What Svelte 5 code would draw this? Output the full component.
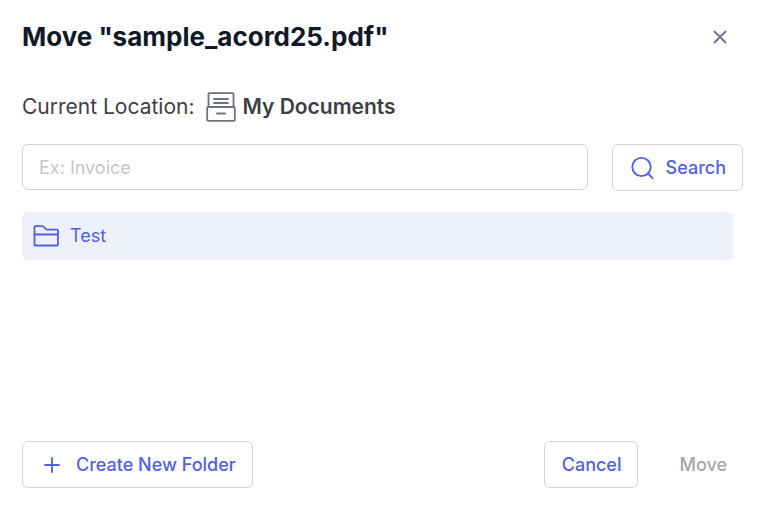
<script>
  const fileName = 'sample_acord25.pdf';
  const currentLocation = 'My Documents';
  const folders = ['Test'];

  let query = $state('');
  let creating = $state(false);
  let open = $state(true);
  let target = $state('');

  const visible = $derived(
    folders.filter((name) => name.toLowerCase().includes(query.trim().toLowerCase()))
  );

  function close() {
    open = false;
  }
</script>

{#if open}
  <div class="dialog" role="dialog" aria-labelledby="dialog-title">
    <header>
      <h1 id="dialog-title">Move "{fileName}"</h1>
      <button class="close" aria-label="Close" onclick={close}>
        <svg width="16" height="16" viewBox="0 0 16 16">
          <path d="M2.500 2.500l11 11M13.500 2.500L2.500 13.500" />
        </svg>
      </button>
    </header>

    <div class="location">
      <span>Current Location:</span>
      <svg width="30" height="30" viewBox="0 0 30 30">
        <path d="M2.500 15V2a.8.8 0 0 1 .8-.8h23.400a.8.8 0 0 1 .8.8V15" />
        <rect x="1.2" y="15" width="27.6" height="13.8" rx="1" />
        <path d="M8 7h14M8 11h14M11 21.5h8" />
      </svg>
      <strong>{currentLocation}</strong>
    </div>

    <form class="search" onsubmit={(e) => e.preventDefault()}>
      <input type="text" aria-label="Folder name" placeholder="Ex: Invoice" bind:value={query} />
      <button class="outlined with-icon" type="submit">
        <svg width="24" height="24" viewBox="0 0 24 24">
          <circle cx="11.5" cy="11" r="9.2" />
          <path d="M18 17.500l4.500 4.500" />
        </svg>
        Search
      </button>
    </form>

    <ul class="folders">
      {#each visible as name}
        <li>
          <button class="folder" onclick={() => (target = name)}>
            <svg width="26" height="22" viewBox="0 0 26 22">
              <path d="M1.500 19.700V2a.8.8 0 0 1 .8-.8h7a1.500 1.500 0 0 1 1 .4l3 2.700a1.500 1.500 0 0 0 1 .4h9.900a.8.8 0 0 1 .8.8v14.200a.8.8 0 0 1-.8.8H2.300a.8.8 0 0 1-.8-.8zM1.500 9.500h23.500" />
            </svg>
            {name}
          </button>
        </li>
      {/each}
    </ul>

    <footer>
      <button class="outlined with-icon" onclick={() => (creating = true)}>
        <svg width="24" height="24" viewBox="0 0 24 24">
          <path d="M12 5v14M5 12h14" />
        </svg>
        Create New Folder
      </button>
      <div class="actions">
        <button class="outlined" onclick={close}>Cancel</button>
        <button class="move" disabled={!target} onclick={close}>Move</button>
      </div>
    </footer>
  </div>
{/if}

<style>
  :global(body) {
    margin: 0;
    background: #fff;
    font-family: Inter, sans-serif;
  }

  .dialog {
    box-sizing: border-box;
    display: flex;
    flex-direction: column;
    min-height: 100vh;
    padding: 20px 19px 24px 22px;
    color: #3f4047;
  }

  header {
    display: flex;
    align-items: center;
    justify-content: space-between;
    padding-right: 8px;
  }

  h1 {
    margin: 0;
    font-size: 26px;
    line-height: 34px;
    font-weight: 700;
    color: #111827;
  }

  button,
  input {
    box-sizing: border-box;
    font-family: inherit;
    font-size: 18px;
    line-height: 24px;
  }

  button {
    display: flex;
    align-items: center;
    border: 1px solid transparent;
    background: none;
    color: #4f5fe6;
    font-weight: 500;
    cursor: pointer;
  }

  svg {
    flex: none;
    fill: none;
    stroke: currentColor;
    stroke-width: 1.8;
    stroke-linecap: round;
    stroke-linejoin: round;
  }

  .close {
    padding: 0 6px;
    color: #6b7280;
  }

  .location {
    display: flex;
    align-items: center;
    margin-top: 38px;
    font-size: 21px;
    line-height: 30px;
  }

  .location svg {
    margin: 0 6px 0 12px;
    color: #6b7280;
  }

  .location strong {
    font-weight: 600;
  }

  .search {
    display: flex;
    gap: 24px;
    margin-top: 22px;
  }

  input {
    flex: 1;
    min-width: 0;
    height: 46px;
    padding: 0 16px;
    border: 1px solid #cfd0d4;
    border-radius: 6px;
    color: #3f4047;
  }

  input::placeholder {
    color: #c4c5ca;
    opacity: 1;
  }

  .outlined {
    height: 47px;
    padding: 0 16px 0 17px;
    border-color: #d3d4d8;
    border-radius: 6px;
  }

  .with-icon {
    gap: 12px;
  }

  .folders {
    margin: 21px 10px 0 0;
    padding: 0;
    list-style: none;
  }

  .folder {
    width: 100%;
    height: 48px;
    gap: 11px;
    padding: 0 10px;
    border-radius: 6px;
    background: #eef0f9;
    font-weight: 400;
  }

  footer {
    display: flex;
    justify-content: space-between;
    margin-top: auto;
  }

  .actions {
    display: flex;
    gap: 24px;
  }

  .move {
    padding: 0 15px 0 16px;
  }

  .move:disabled {
    color: #a3a6ad;
    cursor: default;
  }
</style>
